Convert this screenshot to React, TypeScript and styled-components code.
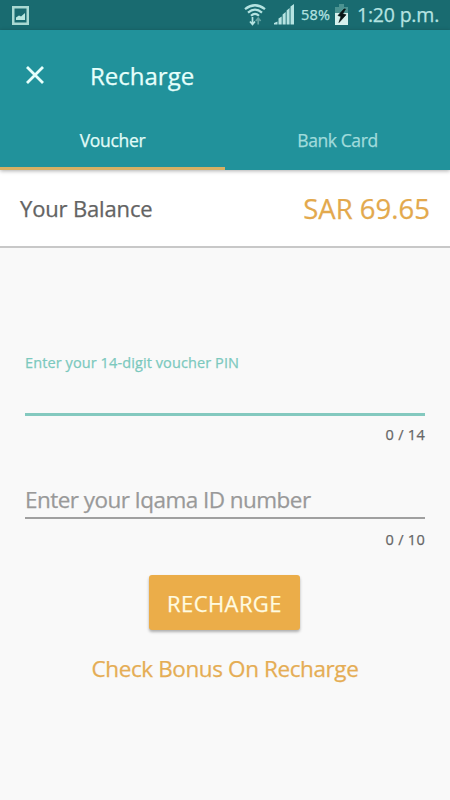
import React from "react";
import styled, { createGlobalStyle } from "styled-components";

const GlobalStyle = createGlobalStyle`
  * { box-sizing: border-box; }
  body { margin: 0; background: #f9f9f9; }
  button, input { font: inherit; border: 0; padding: 0; background: none; }
`;

const Screen = styled.div`
  width: 450px;
  height: 800px;
  overflow: hidden;
  display: flex;
  flex-direction: column;
  background: #f9f9f9;
  font-family: "Open Sans", "Noto Sans", sans-serif;
`;

const Label = styled.span<{ $size: number; $spacing?: number }>`
  font-size: ${(p) => p.$size}px;
  letter-spacing: ${(p) => p.$spacing ?? 0}px;
  line-height: 1.36;
  white-space: nowrap;
  -webkit-text-stroke: 0.25px currentColor;
`;

const StatusBar = styled.header`
  height: 30px;
  flex: none;
  display: flex;
  align-items: center;
  padding: 0 10px 0 12px;
  background: #196b70;
  color: #b5e3e1;
`;

const StatusIcons = styled.div`
  display: flex;
  align-items: center;
  margin-left: auto;
`;

const Percent = styled(Label)`
  width: 34px;
  margin-left: 7px;
`;

const Clock = styled(Label)`
  width: 83px;
  margin-left: 9px;
  padding-top: 1px;
`;

const AppBar = styled.div`
  height: 140px;
  flex: none;
  display: flex;
  flex-direction: column;
  background: #21929b;
  box-shadow: 0 1px 4px rgba(0, 0, 0, 0.32);
  z-index: 1;
`;

const TitleRow = styled.div`
  height: 82px;
  display: flex;
  align-items: center;
  padding: 9px 26px 0 25px;
  color: #e6fffb;
`;

const Title = styled(Label)`
  padding-top: 1px;
`;

const CloseButton = styled.button`
  width: 20px;
  height: 20px;
  margin: 0 45px 1px 0;
  color: inherit;
  svg { display: block; }
`;

const Tabs = styled.nav`
  height: 58px;
  display: grid;
  grid-template-columns: 1fr 1fr;
`;

const Tab = styled.button<{ $active?: boolean }>`
  display: flex;
  justify-content: center;
  align-items: flex-start;
  padding-top: 17px;
  color: ${(p) => (p.$active ? "#e2fcf8" : "#a1dcdc")};
  border-bottom: 3px solid ${(p) => (p.$active ? "#d6b063" : "transparent")};
`;

const BalanceRow = styled.section`
  height: 78px;
  flex: none;
  display: flex;
  align-items: center;
  justify-content: space-between;
  padding: 2px 20px 0;
  background: #fff;
  border-bottom: 2px solid #c8c8c8;
  color: #636363;
`;

const Amount = styled(Label)`
  color: #e3a94d;
`;

const Form = styled.main`
  display: flex;
  flex-direction: column;
  align-items: center;
  padding: 105px 25px 0;
`;

const Field = styled.div<{ $focused?: boolean }>`
  width: 100%;
  height: ${(p) => (p.$focused ? 130 : 92)}px;
  display: flex;
  flex-direction: column;
  color: ${(p) => (p.$focused ? "#7cc9be" : "#999")};
`;

const InputLine = styled.div<{ $height: number; $thick: number; $color: string }>`
  width: 100%;
  height: ${(p) => p.$height}px;
  flex: none;
  display: flex;
  padding-top: 2px;
  border-bottom: ${(p) => p.$thick}px solid ${(p) => p.$color};
`;

const Counter = styled(Label)<{ $gap: number }>`
  align-self: flex-end;
  margin-top: ${(p) => p.$gap}px;
  color: #666;
`;

const RechargeButton = styled.button`
  width: 151px;
  height: 55px;
  display: flex;
  align-items: center;
  justify-content: center;
  padding-top: 2px;
  margin-right: 1px;
  border-radius: 3px;
  background: #ebad49;
  color: #fffbe0;
  box-shadow: 0 2px 3px rgba(0, 0, 0, 0.3);
`;

const BonusLink = styled(Label)`
  margin-top: 24px;
  color: #e5ad54;
`;

const PictureIcon = () => (
  <svg width="17" height="19" viewBox="0 0 17 19">
    <rect x="1.25" y="1.25" width="14.5" height="16.5" fill="none" stroke="#a9d9d2" strokeWidth="2.5" />
    <path d="M4 14V11.5L7 9.5L9 10.5L13 7V14Z" fill="#b7e6df" />
  </svg>
);

const WifiIcon = () => (
  <svg width="22" height="24" viewBox="0 0 22 24" fill="none" stroke="#b5e3e1" strokeWidth="2.2">
    <path d="M1 6.2Q11 -1.7 21 6.2M4 9.6Q11 3.6 18 9.6M7 12.8Q11 9 15 12.8" />
    <path d="M8.5 14V21M6 18.5L8.5 21.5L11 18.5" strokeWidth="1.7" />
    <path d="M14.2 21.5V15.5M11.8 18L14.2 15L16.6 18" stroke="#65a4a3" strokeWidth="1.7" />
  </svg>
);

const SignalIcon = () => (
  <svg width="20" height="21" viewBox="0 0 20 21" fill="#b5e3e1">
    <path d="M0 20.5V19L3.5 17.5V20.5ZM4.5 20.5V14.5L7.7 12.5V20.5ZM8.6 20.5V10.5L11.7 8V20.5ZM12.6 20.5V6.5L15.6 4V20.5ZM16.5 20.5V2.5L20 0V20.5Z" />
  </svg>
);

const BatteryIcon = () => (
  <svg width="13" height="21" viewBox="0 0 13 21">
    <path d="M0 3H4V0H9V3H13V9H0Z" fill="#4b9391" />
    <path d="M0 9H13V21H0Z" fill="#d6f1ed" />
    <path d="M9 5L3 11.5L6 12.5L4 18.5L11 10.8L7.7 9.8L10.5 5Z" fill="#071516" stroke="#071516" strokeWidth=".7" />
  </svg>
);

const SignalSlot = styled.span`
  display: flex;
  margin-left: 8px;
`;

export default function App() {
  return (
    <Screen>
      <GlobalStyle />
      <StatusBar>
        <PictureIcon />
        <StatusIcons>
          <WifiIcon />
          <SignalSlot><SignalIcon /></SignalSlot>
          <Percent $size={14.5} $spacing={0.2}>58%</Percent>
          <BatteryIcon />
          <Clock $size={19.5} $spacing={-0.2}>1:20 p.m.</Clock>
        </StatusIcons>
      </StatusBar>
      <AppBar>
        <TitleRow>
          <CloseButton aria-label="Close">
            <svg width="20" height="20" viewBox="0 0 20 20" fill="none" stroke="currentColor" strokeWidth="2.8">
              <path d="M2 2L18 18M18 2L2 18" />
            </svg>
          </CloseButton>
          <Title $size={24}>Recharge</Title>
        </TitleRow>
        <Tabs>
          <Tab $active><Label $size={17.5} $spacing={-0.3}>Voucher</Label></Tab>
          <Tab><Label $size={17.5} $spacing={-0.4}>Bank Card</Label></Tab>
        </Tabs>
      </AppBar>
      <BalanceRow>
        <Label $size={22} $spacing={-0.15}>Your Balance</Label>
        <Amount $size={27.5}>SAR 69.65</Amount>
      </BalanceRow>
      <Form>
        <Field $focused>
          <Label $size={14.5} $spacing={0.1}>Enter your 14-digit voucher PIN</Label>
          <InputLine $height={43} $thick={3} $color="#84c9bf" />
          <Counter $size={14.5} $spacing={0.3} $gap={9}>0 / 14</Counter>
        </Field>
        <Field>
          <InputLine $height={36} $thick={2} $color="#a0a0a0">
            <Label $size={22.5} $spacing={-0.55}>Enter your Iqama ID number</Label>
          </InputLine>
          <Counter $size={14.5} $spacing={0.3} $gap={11}>0 / 10</Counter>
        </Field>
        <RechargeButton><Label $size={22} $spacing={0.4}>RECHARGE</Label></RechargeButton>
        <BonusLink $size={22.5} $spacing={-0.4}>Check Bonus On Recharge</BonusLink>
      </Form>
    </Screen>
  );
}
